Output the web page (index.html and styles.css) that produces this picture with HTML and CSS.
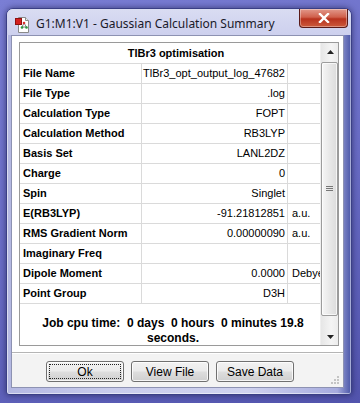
FILE: index.html
```html
<!DOCTYPE html>
<html lang="en">
<head>
  <meta charset="UTF-8" />
  <meta name="viewport" content="width=device-width, initial-scale=1.0"/>
  <title>Gaussian Calculation Summary</title>
  <link rel="stylesheet" href="styles.css">
</head>
<body>
  <div class="window">
    <!-- Title bar -->
    <div class="titlebar">
      <svg class="app-icon" width="16" height="16" viewBox="0 0 16 16">
        <path d="M3.5 0.5h7l3 3v12h-10z" fill="#fff" stroke="#8a8a8a"/>
        <path d="M10.5 0.5v3h3" fill="#e8e8e8" stroke="#8a8a8a"/>
        <rect x="0.5" y="1.5" width="6" height="6" fill="#d42020" stroke="#901010"/>
        <path d="M9 6l-2 4M9 6l2.5 4M7 10l4.5 0" stroke="#606060" stroke-width="0.8"/>
        <circle cx="9" cy="6" r="1.3" fill="#d83030"/>
        <circle cx="7" cy="10.5" r="1.3" fill="#2a9a40"/>
        <circle cx="11.5" cy="10.5" r="1.3" fill="#2a9a40"/>
      </svg>
      <span class="title">G1:M1:V1 - Gaussian Calculation Summary</span>
      <div class="close-btn">
        <svg width="12" height="10" viewBox="0 0 12 10">
          <path d="M2 1l8 8M10 1l-8 8" stroke="#fff" stroke-width="2.4" stroke-linecap="square"/>
        </svg>
      </div>
    </div>

    <!-- Client area -->
    <div class="client">
      <div class="panel">
        <div class="list">
          <div class="rows">
            <div class="head">TlBr3 optimisation</div>
            <div class="row"><div class="key">File Name</div><div class="val">TlBr3_opt_output_log_47682</div><div class="unit"></div></div>
            <div class="row"><div class="key">File Type</div><div class="val">.log</div><div class="unit"></div></div>
            <div class="row"><div class="key">Calculation Type</div><div class="val">FOPT</div><div class="unit"></div></div>
            <div class="row"><div class="key">Calculation Method</div><div class="val">RB3LYP</div><div class="unit"></div></div>
            <div class="row"><div class="key">Basis Set</div><div class="val">LANL2DZ</div><div class="unit"></div></div>
            <div class="row"><div class="key">Charge</div><div class="val">0</div><div class="unit"></div></div>
            <div class="row"><div class="key">Spin</div><div class="val">Singlet</div><div class="unit"></div></div>
            <div class="row"><div class="key">E(RB3LYP)</div><div class="val">-91.21812851</div><div class="unit">a.u.</div></div>
            <div class="row"><div class="key">RMS Gradient Norm</div><div class="val">0.00000090</div><div class="unit">a.u.</div></div>
            <div class="row"><div class="key">Imaginary Freq</div><div class="val"></div><div class="unit"></div></div>
            <div class="row"><div class="key">Dipole Moment</div><div class="val">0.0000</div><div class="unit">Debye</div></div>
            <div class="row"><div class="key">Point Group</div><div class="val">D3H</div><div class="unit"></div></div>
            <div class="cpu">Job cpu time:  0 days  0 hours  0 minutes 19.8<br>seconds.</div>
          </div>

          <!-- Vertical scrollbar -->
          <div class="scrollbar">
            <div class="sb-arrow">
              <svg width="7" height="4" viewBox="0 0 7 4"><path d="M0 4L3.5 0L7 4z" fill="#222"/></svg>
            </div>
            <div class="sb-track">
              <div class="sb-thumb">
                <svg width="7" height="6" viewBox="0 0 7 6"><path d="M0 0.5h7M0 2.5h7M0 4.5h7" stroke="#777" stroke-width="1"/></svg>
              </div>
            </div>
            <div class="sb-arrow">
              <svg width="7" height="4" viewBox="0 0 7 4"><path d="M0 0L3.5 4L7 0z" fill="#222"/></svg>
            </div>
          </div>
        </div>
      </div>

      <!-- Dialog buttons -->
      <div class="actions">
        <button class="btn btn-default"><span>Ok</span></button>
        <button class="btn">View File</button>
        <button class="btn">Save Data</button>
        <svg class="grip" width="10" height="10" viewBox="0 0 10 10">
          <rect x="7" y="1" width="2" height="2" fill="#c4c4c4"/>
          <rect x="4" y="4" width="2" height="2" fill="#c4c4c4"/>
          <rect x="7" y="4" width="2" height="2" fill="#c4c4c4"/>
          <rect x="1" y="7" width="2" height="2" fill="#c4c4c4"/>
          <rect x="4" y="7" width="2" height="2" fill="#c4c4c4"/>
          <rect x="7" y="7" width="2" height="2" fill="#c4c4c4"/>
        </svg>
      </div>
    </div>
  </div>
</body>
</html>
```

FILE: styles.css
```css
/*
  Desktop behind the window
*/
* {
  box-sizing: border-box;
  margin: 0;
  padding: 0;
}
body {
  width: 360px;
  height: 403px;
  overflow: hidden;
  background: linear-gradient(160deg, #7a7ed4 0%, #6a6dc6 50%, #5254ad 100%);
  font-family: "Liberation Sans", Arial, sans-serif;
  font-size: 11px;
  color: #000;
  padding: 8px 0 0 6px;
}
/*
  Aero glass frame
*/
.window {
  width: 346px;
  height: 387px;
  border: 1px solid #3a3f86;
  border-radius: 7px 7px 3px 3px;
  background: linear-gradient(to right, #b4b8e2 0%, #c9ccec 30%, #cfd2ef 70%, #a6abde 96%, #4a56a8 100%);
  box-shadow: 0 0 6px rgba(20, 20, 60, 0.6), inset 0 0 0 1px rgba(255, 255, 255, 0.5);
  display: flex;
  flex-direction: column;
}
.titlebar {
  height: 26px;
  display: flex;
  align-items: flex-start;
  border-radius: 6px 6px 0 0;
  background: linear-gradient(to bottom, #d9dcf2, #cdd0ee);
}
.app-icon {
  margin: 8px 0 0 8px;
  flex: none;
}
.title {
  margin: 6px 0 0 5px;
  font-family: "Noto Sans", "Open Sans", sans-serif;
  font-size: 12px;
  color: #1a1a2a;
  white-space: nowrap;
}
.close-btn {
  margin: 0 3px 0 auto;
  width: 49px;
  height: 19px;
  border: 1px solid #5a1a18;
  border-top: none;
  border-radius: 0 0 4px 4px;
  background: linear-gradient(to bottom, #e2998c 0%, #d0604c 45%, #b8321e 55%, #cc5a3c 100%);
  box-shadow: inset 0 0 0 1px rgba(255, 255, 255, 0.35);
  display: flex;
  align-items: center;
  justify-content: center;
}
/*
  Client area
*/
.client {
  margin: 0 7px 6px 4px;
  flex: 1;
  border: 1px solid #8d92b2;
  background: #f3f3f3;
  display: flex;
  flex-direction: column;
}
.panel {
  background: #fff;
  padding: 6px 4px 6px 7px;
  border-bottom: 1px solid #b5b5b5;
}
.list {
  height: 304px;
  border: 1px solid #9a9a9a;
  display: flex;
}
.rows {
  width: 300px;
  flex: none;
}
.head {
  height: 21px;
  border-bottom: 1px solid #dadada;
  font-weight: bold;
  text-align: center;
  padding: 4px 0 0 12px;
}
.row {
  height: 20px;
  display: flex;
  border-bottom: 1px solid #dadada;
}
.row > div {
  line-height: 19px;
  white-space: nowrap;
  overflow: hidden;
}
.key {
  width: 122px;
  flex: none;
  padding-left: 3px;
  font-weight: bold;
  border-right: 1px solid #dadada;
}
.val {
  width: 146px;
  flex: none;
  padding-right: 2px;
  text-align: right;
  border-right: 1px solid #dadada;
}
.unit {
  flex: 1;
  padding-left: 4px;
}
.cpu {
  padding: 12px 0 0 6px;
  font-size: 12px;
  font-weight: bold;
  text-align: center;
  line-height: 15px;
  white-space: pre;
}
/*
  Scrollbar
*/
.scrollbar {
  flex: 1;
  display: flex;
  flex-direction: column;
  background: linear-gradient(to right, #e6e6e6, #f4f4f4 60%, #ececec);
  border-left: 1px solid #efefef;
}
.sb-arrow {
  height: 17px;
  display: flex;
  align-items: center;
  justify-content: center;
  padding-left: 1px;
}
.sb-track {
  flex: 1;
  padding: 2px 0 0 0;
}
.sb-thumb {
  height: 254px;
  border: 1px solid #9c9c9c;
  border-radius: 2px;
  background: linear-gradient(to right, #f6f6f6, #e8e8e8 50%, #dcdcdc);
  box-shadow: inset 0 0 0 1px rgba(255, 255, 255, 0.7);
  display: flex;
  align-items: center;
  justify-content: center;
}
/*
  Buttons
*/
.actions {
  flex: 1;
  border-top: 1px solid #fff;
  padding: 7px 0 0 34px;
  display: flex;
  gap: 7px;
  align-items: flex-start;
  position: relative;
}
.btn {
  width: 78px;
  height: 21px;
  font-family: "Liberation Sans", Arial, sans-serif;
  font-size: 12px;
  color: #000;
  border: 1px solid #707070;
  border-radius: 3px;
  background: linear-gradient(to bottom, #f2f2f2 0%, #ebebeb 45%, #dddddd 55%, #cfcfcf 100%);
  box-shadow: inset 0 0 0 1px rgba(255, 255, 255, 0.8);
}
.btn-default span {
  display: block;
  margin: 2px;
  height: 15px;
  line-height: 14px;
  border: 1px dotted #222;
}
.grip {
  position: absolute;
  right: 3px;
  bottom: 2px;
}
```
